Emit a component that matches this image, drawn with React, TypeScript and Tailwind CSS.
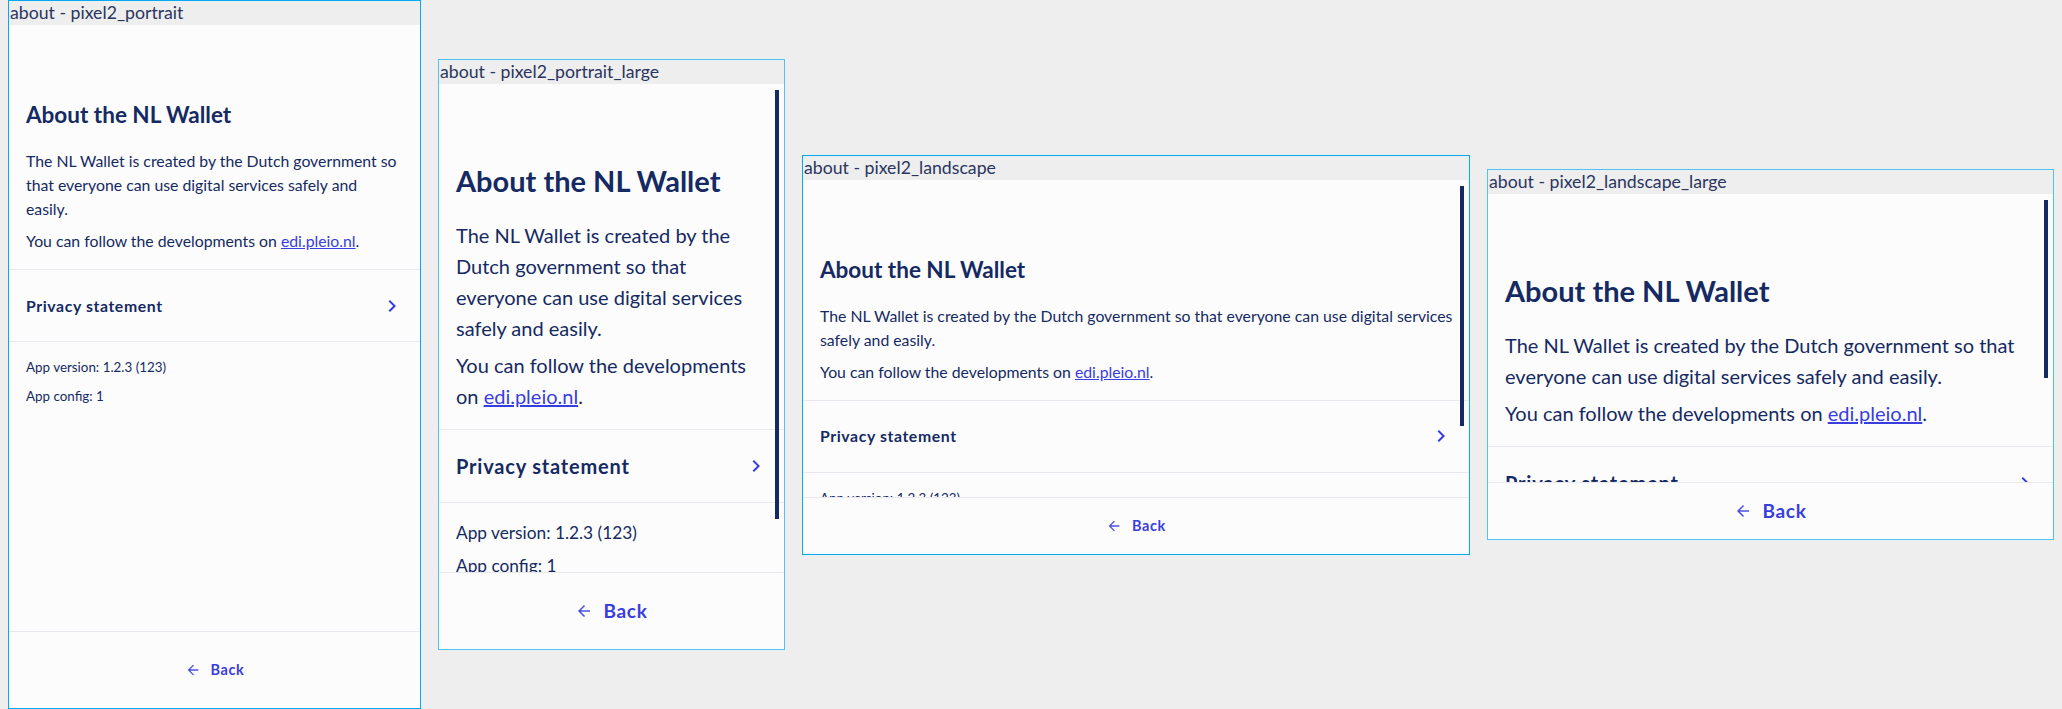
import React from "react";

type Size = {
  top: string;
  title: string;
  text: string;
  firstGap: string;
  secondGap: string;
  introPb: string;
  row: string;
  rowText: string;
  version: string;
  back: string;
  arrow: number;
};

const normal: Size = {
  top: "pt-[76px]",
  title: "text-[22.5px] leading-[28px]",
  text: "text-[15.8px] leading-[24px]",
  firstGap: "mt-5",
  secondGap: "mt-2",
  introPb: "pb-4",
  row: "h-[72px]",
  rowText: "text-[15.8px] tracking-[0.6px]",
  version: "pt-[11px] text-[13.4px] leading-[29px]",
  back: "text-[14.5px] tracking-[0.6px]",
  arrow: 16,
};

const large: Size = {
  top: "pt-[79px]",
  title: "text-[29px] leading-[36px]",
  text: "text-[20px] leading-[31px]",
  firstGap: "mt-[21px]",
  secondGap: "mt-[6px]",
  introPb: "pb-[17px]",
  row: "h-[73px]",
  rowText: "text-[20px] tracking-[0.8px]",
  version: "pt-[13px] text-[17.3px] leading-[33px]",
  back: "text-[19px] tracking-[0.7px]",
  arrow: 18,
};

function ChevronRight() {
  return (
    <svg width="24" height="24" viewBox="0 0 24 24" className="shrink-0 fill-[#383ede]">
      <path d="M10 6 8.59 7.41 13.17 12l-4.58 4.59L10 18l6-6z" />
    </svg>
  );
}

function ArrowBack({ size }: { size: number }) {
  return (
    <svg width={size} height={size} viewBox="0 0 24 24" className="shrink-0 fill-[#4a50e2]">
      <path d="M20 11H7.83l5.59-5.59L12 4l-8 8 8 8 1.41-1.41L7.83 13H20v-2z" />
    </svg>
  );
}

function AboutScreen({ s, introPr }: { s: Size; introPr: string }) {
  return (
    <div className="text-[#152a62]">
      <div className={`border-b border-[#e8e8ee] pl-[17px] ${introPr} ${s.top} ${s.introPb}`}>
        <h1 className={`font-bold ${s.title}`}>About the NL Wallet</h1>
        <p className={`${s.text} ${s.firstGap}`}>
          The NL Wallet is created by the Dutch government so that everyone can use digital services safely and
          easily.
        </p>
        <p className={`${s.text} ${s.secondGap}`}>
          You can follow the developments on <span className="text-[#383ede] underline">edi.pleio.nl</span>.
        </p>
      </div>
      <div className={`flex items-center justify-between border-b border-[#e8e8ee] pl-[17px] pr-4 ${s.row}`}>
        <span className={`font-bold ${s.rowText}`}>Privacy statement</span>
        <ChevronRight />
      </div>
      <div className={`px-[17px] ${s.version}`}>
        <p>App version: 1.2.3 (123)</p>
        <p>App config: 1</p>
      </div>
    </div>
  );
}

type PanelProps = {
  label: string;
  box: string;
  border: string;
  bar: string;
  s: Size;
  introPr: string;
  scrollbar?: string;
};

function Panel({ label, box, border, bar, s, introPr, scrollbar }: PanelProps) {
  return (
    <div className={`flex shrink-0 flex-col border bg-[#fcfcfc] ${border} ${box}`}>
      <div className="h-6 shrink-0 overflow-hidden whitespace-nowrap bg-[#eeeeee] pl-px text-[17.7px] leading-[24px] text-[#2a3560]">
        {label}
      </div>
      <div className="relative min-h-0 flex-1 overflow-hidden">
        <AboutScreen s={s} introPr={introPr} />
        {scrollbar && <div className={`absolute right-[5px] top-[6px] w-1 bg-[#152a62] ${scrollbar}`} />}
      </div>
      <div className={`flex shrink-0 items-center justify-center gap-[10px] border-t border-[#e8e8ee] ${bar}`}>
        <ArrowBack size={s.arrow} />
        <span className={`font-bold text-[#383ede] ${s.back}`}>Back</span>
      </div>
    </div>
  );
}

export default function App() {
  return (
    <div className="flex h-[709px] w-[2062px] items-center gap-[17px] bg-[#eeeeee] pl-2 font-['Lato',sans-serif]">
      <Panel
        label="about - pixel2_portrait"
        box="h-[709px] w-[413px]"
        border="border-[#03a9f4]"
        bar="h-[77px]"
        s={normal}
        introPr="pr-[17px]"
      />
      <Panel
        label="about - pixel2_portrait_large"
        box="h-[591px] w-[347px]"
        border="border-[#4fc3f7]"
        bar="h-[77px]"
        s={large}
        introPr="pr-[17px]"
        scrollbar="h-[429px]"
      />
      <Panel
        label="about - pixel2_landscape"
        box="h-[400px] w-[668px]"
        border="border-[#03a9f4]"
        bar="h-[57px]"
        s={normal}
        introPr="pr-[14px]"
        scrollbar="h-[240px]"
      />
      <Panel
        label="about - pixel2_landscape_large"
        box="h-[371px] w-[567px]"
        border="border-[#4fc3f7]"
        bar="h-[57px]"
        s={large}
        introPr="pr-[14px]"
        scrollbar="h-[178px]"
      />
    </div>
  );
}
